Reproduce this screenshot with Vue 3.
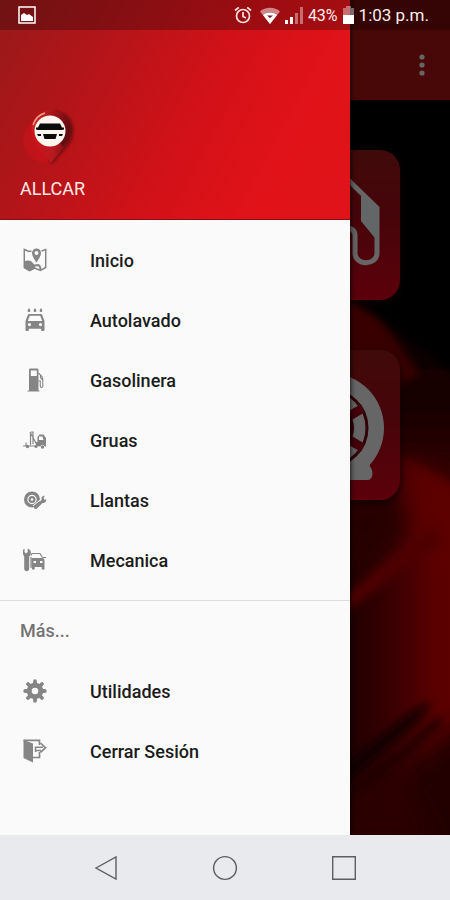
<script setup>
const services = [
  { icon: 'map', label: 'Inicio' },
  { icon: 'wash', label: 'Autolavado' },
  { icon: 'fuel', label: 'Gasolinera' },
  { icon: 'tow', label: 'Gruas' },
  { icon: 'tire', label: 'Llantas' },
  { icon: 'mechanic', label: 'Mecanica' },
]
const more = [
  { icon: 'gear', label: 'Utilidades' },
  { icon: 'exit', label: 'Cerrar Sesión' },
]
</script>

<template>
  <div class="phone">
    <!-- Shared menu glyphs -->
    <svg class="sprite" aria-hidden="true">
      <symbol id="map" viewBox="0 0 24 24">
        <path d="M8.500 3 6 3.500 1.300 1.500v18L6.500 22.500l5-2.500 6 2.500 5.200-3V1.500L18.500 3" fill="none" stroke="currentColor" stroke-width="1.500" />
        <path d="M1 13.500c2.500-1 5-1.500 7.500 0 1.500 1.200 1.500 2.500 4 3.500l-.500 3.500-5.500 3L1 20z" />
        <path d="M12 17.500l3-.500c1.500.500 2.500 2 2.500 5" fill="none" stroke="currentColor" stroke-width="2" />
        <path fill-rule="evenodd" d="M13.500.500a4.500 4.500 0 0 1 4.500 4.600c0 3.400-4.500 9.400-4.500 9.400S9 8.500 9 5.100A4.500 4.500 0 0 1 13.500.500zm0 2.500a2 2 0 1 0 0 4 2 2 0 0 0 0-4z" />
      </symbol>
      <symbol id="wash" viewBox="0 0 24 24">
        <path d="M6 0c2 2.500 1.500 4 0 4S4 2.500 6 0zM12 0c2 2.500 1.500 4 0 4s-2-1.500 0-4zM18 0c2 2.500 1.500 4 0 4s-2-1.500 0-4z" />
        <path fill-rule="evenodd" d="M6.500 6h11c1 0 1.500.500 1.800 1.300L21.500 13v9c0 .600-.400 1-1 1h-1.300c-.600 0-1-.400-1-1v-1.200H5.800V22c0 .600-.400 1-1 1H3.500c-.600 0-1-.400-1-1v-9l2.200-5.700C5 6.500 5.500 6 6.500 6zm.300 1.800L4.800 13h14.400l-2-5.200zM6.500 15a1.600 1.600 0 1 0 0 3.200 1.600 1.600 0 0 0 0-3.200zm11 0a1.600 1.600 0 1 0 0 3.200 1.600 1.600 0 0 0 0-3.200z" />
      </symbol>
      <symbol id="fuel" viewBox="0 0 24 24">
        <path fill-rule="evenodd" d="M7.500.500h6.500c1 0 1.500.500 1.500 1.500v20.500h1v1h-12v-1H6V2c0-1 .500-1.500 1.500-1.500zm.300 2V8h6V2.500z" />
        <path d="M15.500 5l3.500 3.500.800 2.500v7c0 2-2.500 2-2.500 0v-5h-1.800M17.500 7v3l2 1.500" fill="none" stroke="currentColor" stroke-width="1.100" />
      </symbol>
      <symbol id="tow" viewBox="0 0 24 24">
        <path d="M0 18h13M3 17.500v-3M7.500 17V5M7 4l7 13M8 4h2v12" fill="none" stroke="currentColor" stroke-width="1.200" />
        <path fill-rule="evenodd" d="M13 18v-4h1.500V9l2-2.500h4L23 10v8.500h-1.300a2.200 2.200 0 0 0-4.300 0zM16 8.500V12h4.500l-1-3.500z" />
        <circle cx="4.500" cy="18.500" r="1.700" /><circle cx="13" cy="18.500" r="1.500" /><circle cx="19.500" cy="19" r="1.700" />
      </symbol>
      <symbol id="tire" viewBox="0 0 24 24">
        <path fill-rule="evenodd" d="M9 3.500a8 8 0 1 1 0 16 8 8 0 0 1 0-16zm0 3.300a4.700 4.700 0 1 0 0 9.400 4.700 4.700 0 0 0 0-9.400z" />
        <circle cx="9" cy="11.500" r="3.500" />
        <circle cx="9" cy="11.500" r="1.300" class="paper" />
        <path class="paper-line" d="M10 18l7-6" />
        <path d="M11.500 18.500l7-6.500c-.500-3 1.500-4.500 3.500-4.200l-1.500 2 .800 2 2.200-.300c-.500 3-2.500 3.500-4 3.500L14 20.500c-1.500 1.500-4 0-2.500-2z" />
      </symbol>
      <symbol id="mechanic" viewBox="0 0 24 24">
        <path d="M1.500.500v3.500l1.500 1.500 1.700-1.500V.500c4 1.500 4 6 1.500 8v12c0 3.500-5 3.500-5 0v-12C-.500 6.500-1 2 1.500.500z" />
        <path d="M8 7.500l1-2h8l2.500 4M19.500 9.500h3.500M8 20V9" fill="none" stroke="currentColor" stroke-width="1.200" />
        <path fill-rule="evenodd" d="M8.500 10h11.300c1 .500 1.700 1.500 1.700 3v8.500h-2.800V19h-7v2.500H9V19h-.500zM10.500 13v2h2.500v-2zm6.500 0v2h2.500v-2z" />
      </symbol>
      <symbol id="gear" viewBox="0 0 24 24">
        <g fill="none" stroke="currentColor" stroke-linecap="round">
          <circle cx="12" cy="12" r="5.800" stroke-width="5" />
          <path d="M12 2.200V4M12 20v1.800M2.200 12H4M20 12h1.800M5 5l1.500 1.500M17.500 17.500 19 19M5 19l1.500-1.500M17.500 6.500 19 5" stroke-width="3.800" />
        </g>
      </symbol>
      <symbol id="exit" viewBox="0 0 24 24">
        <path d="M.500 1l9.500 3.500V23.500L.500 19z" />
        <path d="M.500 1.300h16V6M16.500 13v5.500H10" fill="none" stroke="currentColor" stroke-width="1.700" />
        <path d="M12.500 13V8.200H20" fill="none" stroke="currentColor" stroke-width="1.500" />
        <path d="M17.500 4l5 4.700-5 4.600M12 11.500h6" fill="none" stroke="currentColor" stroke-width="1.700" />
      </symbol>
    </svg>

    <div class="screen">
      <svg class="backdrop" viewBox="0 0 450 835" preserveAspectRatio="none" aria-hidden="true">
        <defs>
          <linearGradient id="glow" x1="0" x2="1" y1="0" y2="0">
            <stop offset=".76" stop-color="#1c0000" />
            <stop offset=".88" stop-color="#3c0002" />
            <stop offset=".96" stop-color="#580000" />
            <stop offset="1" stop-color="#5c0000" />
          </linearGradient>
          <linearGradient id="shade" x1="0" x2="0" y1="0" y2="1">
            <stop offset="0" stop-color="#0a0000" />
            <stop offset=".45" stop-color="#140001" />
            <stop offset="1" stop-color="#4a0002" />
          </linearGradient>
          <filter id="soft" x="-50%" y="-50%" width="200%" height="200%"><feGaussianBlur stdDeviation="12" /></filter>
          <filter id="edge" x="-30%" y="-30%" width="160%" height="160%"><feGaussianBlur stdDeviation="4" /></filter>
        </defs>
        <rect width="450" height="835" fill="url(#glow)" />
        <path d="M300 280H480V500L400 455 350 540H300z" fill="url(#shade)" filter="url(#edge)" />
        <path d="M335 290l45 25 40 60-70 30z" fill="#380002" filter="url(#edge)" />
        <path d="M300 80H480V392L375 315l-30-22-45-20z" fill="#020000" filter="url(#edge)" />
        <path d="M330 490l70 0 15 35-85 70z" fill="#250002" filter="url(#soft)" />
        <path d="M400 458l80 50v60l-60-10z" fill="#5c0001" filter="url(#soft)" />
        <path d="M335 605l70-60 30-20 5 20-30 20-75 55z" fill="#4e0003" filter="url(#edge)" />
        <path d="M400 770l80-60v160H380z" fill="#240001" filter="url(#soft)" />
        <path d="M330 780l60-25 50 90H330z" fill="#2a0001" filter="url(#soft)" />
        <path d="M335 775l75-62 22-12-12 18-85 72z" fill="#0d0000" filter="url(#edge)" />
        <path d="M335 802l70-50 35-32" fill="none" stroke="#1c0000" stroke-width="8" filter="url(#edge)" />
      </svg>

      <main class="home">
        <header class="app-bar">
          <button class="overflow" type="button" aria-label="Opciones">
            <svg viewBox="0 0 6 22" width="6" height="22"><circle cx="3" cy="3" r="2.600" /><circle cx="3" cy="11" r="2.600" /><circle cx="3" cy="19" r="2.600" /></svg>
          </button>
        </header>
        <div class="tiles">
          <button class="tile" type="button" aria-label="Gasolinera">
            <svg viewBox="0 0 150 150">
              <path d="M94 26l33 32v45c0 13-22 13-22 0V86c0-6-4-8-9-8" fill="none" stroke="#fff" stroke-width="5" />
              <path d="M111 44l18 15v34l-9-11-9-11z" fill="#f8ffff" />
            </svg>
          </button>
          <button class="tile" type="button" aria-label="Llantas">
            <svg viewBox="0 0 150 150">
              <path d="M124 104c-5 5-6 10-3 14 3 5 1 12-3 12H40v-26z" fill="#fff" />
              <circle cx="79" cy="78" r="55" fill="#fff" />
              <circle cx="79" cy="78" r="38" fill="#fff" stroke="#7a0010" stroke-width="3" />
              <path d="M45 58l68 40M45 98l68-40M79 40v76" stroke="#a80018" stroke-width="9" />
              <circle cx="79" cy="78" r="25" fill="#7a0010" /><circle cx="79" cy="78" r="21" fill="#a0a0a0" />
            </svg>
          </button>
        </div>
      </main>

      <aside class="drawer">
        <header class="profile">
          <svg class="logo" viewBox="0 0 60 60" aria-hidden="true">
            <defs>
              <linearGradient id="pin" x1="0" y1="0" x2="1" y2=".4">
                <stop offset="0" stop-color="#d4342e" /><stop offset=".5" stop-color="#a41218" /><stop offset="1" stop-color="#640d12" />
              </linearGradient>
              <linearGradient id="cone" x1="0" x2="1" y1="0" y2="0">
                <stop offset="0" stop-color="#cf1219" /><stop offset=".55" stop-color="#b81a1f" /><stop offset="1" stop-color="#780c12" />
              </linearGradient>
              <filter id="haze" x="-30%" y="-30%" width="160%" height="160%"><feGaussianBlur stdDeviation="1.500" /></filter>
            </defs>
            <circle cx="26" cy="34" r="23" fill="#d01119" opacity=".5" />
            <path d="M34 5c14 1 21 11 19 23-2 13-14 21-21 30l-3-4z" fill="#5c0b0f" opacity=".85" filter="url(#haze)" />
            <path d="M31 57C24 48 11 38 11 24a19.500 19.500 0 0 1 39 0c0 14-12 24-19 33z" fill="url(#cone)" />
            <path d="M12 24a19 19 0 0 1 38 0c0 7-3 12-7 17L31 24z" fill="url(#pin)" />
            <path d="M13 19a18 18 0 0 1 12-12" fill="none" stroke="#f6a08b" stroke-width="1.500" />
            <circle cx="30" cy="25" r="15.500" fill="#fff5ef" />
            <path d="M20 17.500h20l2 4h2v2l-2 .500H18l-2-.500v-2h2zM23 28h14l-1.500 5h-11zM17 28h4v2h-3zM39 28h4l-1 2h-3z" fill="#0b0b0b" />
          </svg>
          <span class="name">ALLCAR</span>
        </header>
        <nav>
          <ul class="menu">
            <li v-for="item in services" :key="item.label">
              <a class="row" href="#"><span class="icon"><svg width="24" height="24"><use :href="'#' + item.icon" /></svg></span>{{ item.label }}</a>
            </li>
          </ul>
          <h2 class="section">Más...</h2>
          <ul class="submenu">
            <li v-for="item in more" :key="item.label">
              <a class="row" href="#"><span class="icon"><svg width="24" height="24"><use :href="'#' + item.icon" /></svg></span>{{ item.label }}</a>
            </li>
          </ul>
        </nav>
      </aside>

      <div class="status">
        <svg class="picture" viewBox="0 0 18 18" width="18" height="18">
          <path d="M1 1h16v16H1z" fill="none" stroke="#fff" stroke-width="1.500" />
          <path d="M3 15V9l3-2 3 2 2-1 4 3v4z" fill="#fff" />
        </svg>
        <svg viewBox="0 0 18 18" width="18" height="18" fill="none" stroke="#ffe3df" stroke-width="1.700">
          <circle cx="9" cy="10" r="6.500" /><path d="M9 6v4.500l3 1.500M1 4.500 4.800 1.300M17 4.500l-3.800-3.200" />
        </svg>
        <svg class="wifi" viewBox="0 0 20 17" width="20" height="17">
          <path d="M0 4.500C5-.500 15-.500 20 4.500L10 17z" fill="#fff" opacity=".5" />
          <path d="M3 8c4-3 10-3 14 0l-7 9z" fill="#fff" />
          <path d="M7 8.500h6l-3 2.500z" fill="#7c1012" />
        </svg>
        <svg class="signal" viewBox="0 0 18 18" width="18" height="18">
          <path d="M0 14h3v4H0zM5 11h3v7H5z" fill="#fff" />
          <path d="M10 7h3v11h-3zM15 1h3v17h-3z" fill="#fff" opacity=".4" />
        </svg>
        <span class="percent">43%</span>
        <svg class="battery" viewBox="0 0 11 18" width="11" height="18">
          <path d="M3 0h5v2h3v8H0V2h3z" fill="#fff" opacity=".4" /><path d="M0 9h11v9H0z" fill="#fff" />
        </svg>
        <span class="clock">1:03 p.m.</span>
      </div>
    </div>

    <footer class="system-nav">
      <button type="button" aria-label="Atrás"><svg viewBox="0 0 24 24" width="24" height="24"><path d="M1 12 21 1v22z" /></svg></button>
      <button type="button" aria-label="Inicio"><svg viewBox="0 0 24 24" width="24" height="24"><circle cx="12" cy="12" r="11.400" /></svg></button>
      <button type="button" aria-label="Recientes"><svg viewBox="0 0 24 24" width="24" height="24"><path d="M.700.700h22.600v22.600H.700z" /></svg></button>
    </footer>
  </div>
</template>

<style>
body {
  background: #e8eaed;
}
</style>

<style scoped>
.phone {
  display: flex;
  flex-direction: column;
  min-height: 100vh;
  font-family: Roboto, "Liberation Sans", sans-serif;
}
.sprite {
  position: absolute;
  width: 0;
  height: 0;
}
.paper {
  fill: #fafafa;
}
.paper-line {
  stroke: #fafafa;
  stroke-width: 1;
}
svg {
  display: block;
  overflow: visible;
}
button {
  border: 0;
  padding: 0;
  background: none;
}
.screen {
  position: relative;
  flex: 1;
  display: grid;
  grid-template-columns: 1fr;
  overflow: hidden;
  background: #000;
}
.backdrop {
  position: absolute;
  inset: 0;
  width: 100%;
  height: 100%;
}
.home,
.drawer {
  grid-area: 1 / 1;
  position: relative;
}
.home {
  filter: brightness(0.4);
}
.app-bar {
  box-sizing: border-box;
  display: flex;
  align-items: center;
  justify-content: flex-end;
  height: 100px;
  padding: 30px 25px 0;
  background: #b41414;
}
.overflow {
  display: block;
  fill: #fff;
}
.tiles {
  display: grid;
  justify-content: end;
  gap: 50px;
  padding: 50px;
}
.tile {
  width: 150px;
  height: 150px;
  border-radius: 20px;
  background: linear-gradient(#a0181a, #b00c18 45%, #e6001c);
  box-shadow: 0 3px 8px #2a0000;
}
.drawer {
  margin-right: 100px;
  background: #fafafa;
  box-shadow: 0 0 6px #000;
}
.profile {
  box-sizing: border-box;
  display: flex;
  flex-direction: column;
  justify-content: flex-end;
  gap: 12px;
  height: 220px;
  padding: 20px 20px 19px;
  border-bottom: 1px solid #8c0e14;
  background: linear-gradient(118deg, #98191a 0%, #b21519 26%, #d31118 56%, #e11319 80%, #df1319 100%);
}
.logo {
  width: 60px;
  height: 60px;
}
.name {
  color: #ffe9e6;
  font-size: 18px;
  line-height: 22px;
}
ul {
  margin: 0;
  padding: 0;
  list-style: none;
}
.menu {
  padding: 10px 0;
  border-bottom: 1px solid #dcdcdc;
}
.row {
  display: flex;
  align-items: center;
  gap: 40px;
  height: 60px;
  padding: 0 20px;
  color: #1c1c1c;
  font-size: 18px;
  font-weight: 500;
  text-decoration: none;
}
.icon {
  display: grid;
  place-items: center;
  width: 30px;
  color: #858585;
  fill: currentColor;
}
.section {
  margin: 0;
  padding: 0 20px;
  color: #737373;
  font-size: 18px;
  font-weight: 500;
  line-height: 60px;
}
.status {
  position: absolute;
  inset: 0 0 auto;
  box-sizing: border-box;
  display: flex;
  align-items: center;
  height: 30px;
  padding: 0 21px 0 18px;
  background: rgba(0, 0, 0, 0.26);
  color: #ffeeeb;
}
.picture {
  margin-right: auto;
}
.wifi {
  margin-left: 8px;
}
.signal {
  margin-left: 5px;
}
.percent {
  margin-left: 5px;
  font-size: 16px;
}
.battery {
  margin: 0 5px;
}
.clock {
  font-size: 17px;
}
.system-nav {
  display: flex;
  align-items: center;
  justify-content: space-evenly;
  height: 65px;
  background: #e8eaed;
  fill: none;
  stroke: #5c5f62;
  stroke-width: 1.4;
}
</style>
